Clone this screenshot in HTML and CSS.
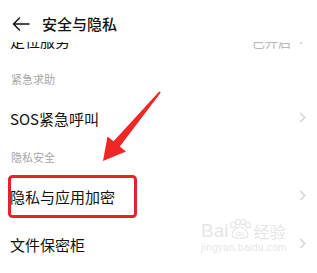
FILE: index.html
```html
<!DOCTYPE html>
<html lang="zh-CN">
<head>
<meta charset="utf-8">
<link rel="stylesheet" href="styles.css">
</head>
<body>
<div class="page">
  <header class="topbar">
    <svg class="back" width="18" height="14" viewBox="0 0 18 14"><path d="M17 7H1.5M7.5 1L1.5 7l6 6" fill="none" stroke="#111" stroke-width="1.5" stroke-linecap="round" stroke-linejoin="round"/></svg>
    <span class="title">安全与隐私</span>
  </header>
  <div class="viewport">
    <div class="scroll">
      <div class="row"><span class="label">定位服务</span><span class="value">已开启</span><span class="chev"></span></div>
      <div class="section">紧急求助</div>
      <div class="row"><span class="label">SOS紧急呼叫</span><span class="chev"></span></div>
      <div class="section">隐私安全</div>
      <div class="row"><span class="label">隐私与应用加密</span><span class="chev"></span></div>
      <div class="row"><span class="label">文件保密柜</span><span class="chev"></span></div>
    </div>
  </div>
  <div class="watermark">
    <div class="wm-top"><span>Bai</span><svg class="paw" width="24" height="20" viewBox="0 0 24 20"><g fill="none" stroke="#e6e6e6" stroke-width="1.2"><ellipse cx="5" cy="6" rx="2.5" ry="3"/><ellipse cx="10" cy="3" rx="2.5" ry="2.6"/><ellipse cx="15" cy="3" rx="2.5" ry="2.6"/><ellipse cx="20" cy="6" rx="2.5" ry="3"/><path d="M12 8c-4 0-8 5-8 8s3 3 8 3 8 0 8-3-4-8-8-8z"/></g><text x="12" y="17" font-size="7" text-anchor="middle" fill="#e6e6e6" font-family="Liberation Sans">du</text></svg><span class="wm-cn">经验</span></div>
    <div class="wm-url">jingyan.baidu.com</div>
  </div>
  <svg class="annot" width="317" height="273" viewBox="0 0 317 273">
    <rect x="9.5" y="176.5" width="126" height="40" rx="3" fill="none" stroke="#e5232a" stroke-width="3"/>
    <polygon points="160.8,92.6 159.2,91.4 113.6,141.2 107.5,136.5 103,161 126,151.5 119.8,146.6" fill="#ee2626"/>
  </svg>
</div>
</body>
</html>
```
FILE: styles.css
```css
* { box-sizing: border-box; }
html, body { margin: 0; padding: 0; background: #fff; }
body {
  font-family: "Noto Sans CJK SC", "Noto Sans", sans-serif;
  color: #111;
  width: 317px;
  height: 273px;
  overflow: hidden;
}
.page { position: relative; width: 317px; height: 273px; overflow: hidden; }
.topbar {
  position: relative;
  z-index: 2;
  height: 42px;
  background: #fff;
  display: flex;
  align-items: flex-start;
  padding: 14px 0 0 12px;
  gap: 12px;
}
.back { margin-top: 3px; }
.title { font-size: 15px; line-height: 20px; font-weight: 500; }
.viewport { height: 231px; overflow: visible; position: relative; z-index: 1; }
.scroll { margin-top: -25px; }
.row {
  height: 48px;
  display: flex;
  align-items: center;
  padding: 0 13px 0 10px;
}
.label { flex: 1; font-size: 15px; line-height: 20px; }
.value { font-size: 13px; color: #b8b8b8; margin-right: 6px; }
.chev {
  width: 7px; height: 7px;
  border-top: 1.2px solid #c4c4c4;
  border-right: 1.2px solid #c4c4c4;
  transform: rotate(45deg);
  margin-top: -3px;
}
.section {
  height: 30px;
  padding: 8px 0 0 11px;
  font-size: 11px;
  line-height: 12px;
  color: #a6a6a6;
}
.watermark {
  position: absolute;
  left: 201px;
  top: 219px;
  z-index: 3;
  color: #e6e6e6;
  font-family: "Liberation Sans", sans-serif;
}
.wm-top { display: flex; align-items: flex-end; font-size: 19px; line-height: 22px; }
.paw { margin: 0 1px 3px 0; }
.wm-cn { font-family: "Noto Sans CJK SC", sans-serif; font-size: 16px; }
.wm-url { font-size: 10px; line-height: 12px; letter-spacing: 0.3px; }
.annot { position: absolute; left: 0; top: 0; z-index: 4; }
```
